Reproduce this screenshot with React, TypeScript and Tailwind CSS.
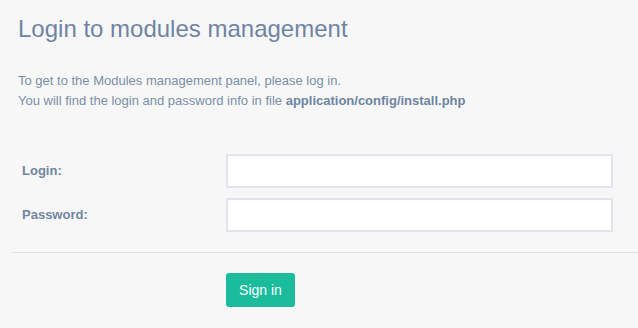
export default function App() {
  return (
    <div className="h-[328px] w-full overflow-hidden bg-[#f7f7f7] font-['Liberation_Sans',Arial,sans-serif] pl-[12px]">
      <h1 className="pl-[6px] pt-[15px] text-[24px] leading-[27px] text-[#6f84a2]">
        Login to modules management
      </h1>

      <div className="mt-[29px] pl-[6px] text-[13px] leading-[20px] text-[#7b8ea8]">
        <p>To get to the Modules management panel, please log in.</p>
        <p>
          You will find the login and password info in file{" "}
          <b className="font-bold text-[#6f84a2]">application/config/install.php</b>
        </p>
      </div>

      <form className="mt-[43px] flex flex-col gap-[10px] pr-[25px]">
        <div className="flex items-center">
          <label className="w-[214px] pl-[10px] text-[13px] font-bold text-[#7186a2]">Login:</label>
          <input
            type="text"
            className="h-[34px] flex-1 border-2 border-[#e1e4ea] bg-white px-2 outline-none"
          />
        </div>
        <div className="flex items-center">
          <label className="w-[214px] pl-[10px] text-[13px] font-bold text-[#7186a2]">Password:</label>
          <input
            type="password"
            className="h-[34px] flex-1 border-2 border-[#e1e4ea] bg-white px-2 outline-none"
          />
        </div>
      </form>

      <hr className="mt-[20px] border-0 border-t border-[#e3e3e3]" />

      <div className="pl-[214px] pt-[20px]">
        <button className="h-[34px] w-[69px] rounded-[3px] bg-[#1abc9c] text-[14px] text-white">
          Sign in
        </button>
      </div>
    </div>
  );
}
